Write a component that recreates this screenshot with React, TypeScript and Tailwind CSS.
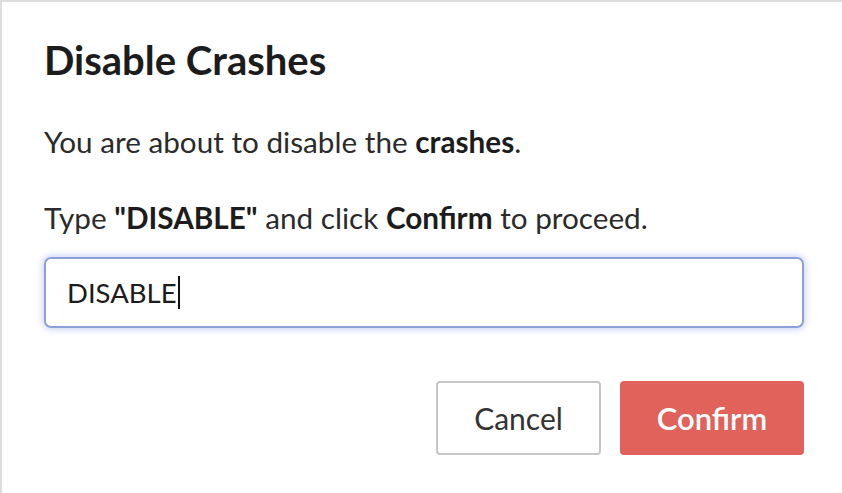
import React from 'react'

export default function App() {
  return (
    <div
      className="w-[842px] h-[493px] bg-white border-t-2 border-l-2 border-[#dddddd] overflow-hidden"
      style={{ fontFamily: 'Lato, "Open Sans", sans-serif' }}
    >
      <div className="pl-[42px] pr-[38px] pt-[34px]">
        <h1 className="text-[40px] leading-[48px] font-bold text-[#1c1c1c]">Disable Crashes</h1>
        <p className="mt-[40px] text-[29.7px] leading-[36px] text-[#2b2b2b]">
          You are about to disable the <b className="font-bold text-[#1c1c1c]">crashes</b>.
        </p>
        <p className="mt-[40px] text-[29.7px] leading-[36px] text-[#2b2b2b]">
          Type <b className="font-bold text-[#1c1c1c]">"DISABLE"</b> and click{' '}
          <b className="font-bold text-[#1c1c1c]">Confirm</b> to proceed.
        </p>
        <div className="mt-[21px] h-[71px] rounded-[7px] border-2 border-[#8d9fd9] shadow-[0_0_6px_2px_rgba(120,145,230,0.35)] flex items-center px-[21px]">
          <span className="text-[27.5px] text-[#1c1c1c]">DISABLE</span>
          <span className="w-[2px] h-[33px] bg-[#111] ml-[1px]" />
        </div>
        <div className="mt-[53px] flex justify-end gap-[19px]">
          <button className="w-[165px] h-[74px] rounded-[4px] border-2 border-[#c6c6c6] bg-white text-[30px] text-[#333]">
            Cancel
          </button>
          <button className="w-[184px] h-[74px] rounded-[4px] bg-[#e0625b] text-[31px] font-semibold text-white">
            Confirm
          </button>
        </div>
      </div>
    </div>
  )
}
